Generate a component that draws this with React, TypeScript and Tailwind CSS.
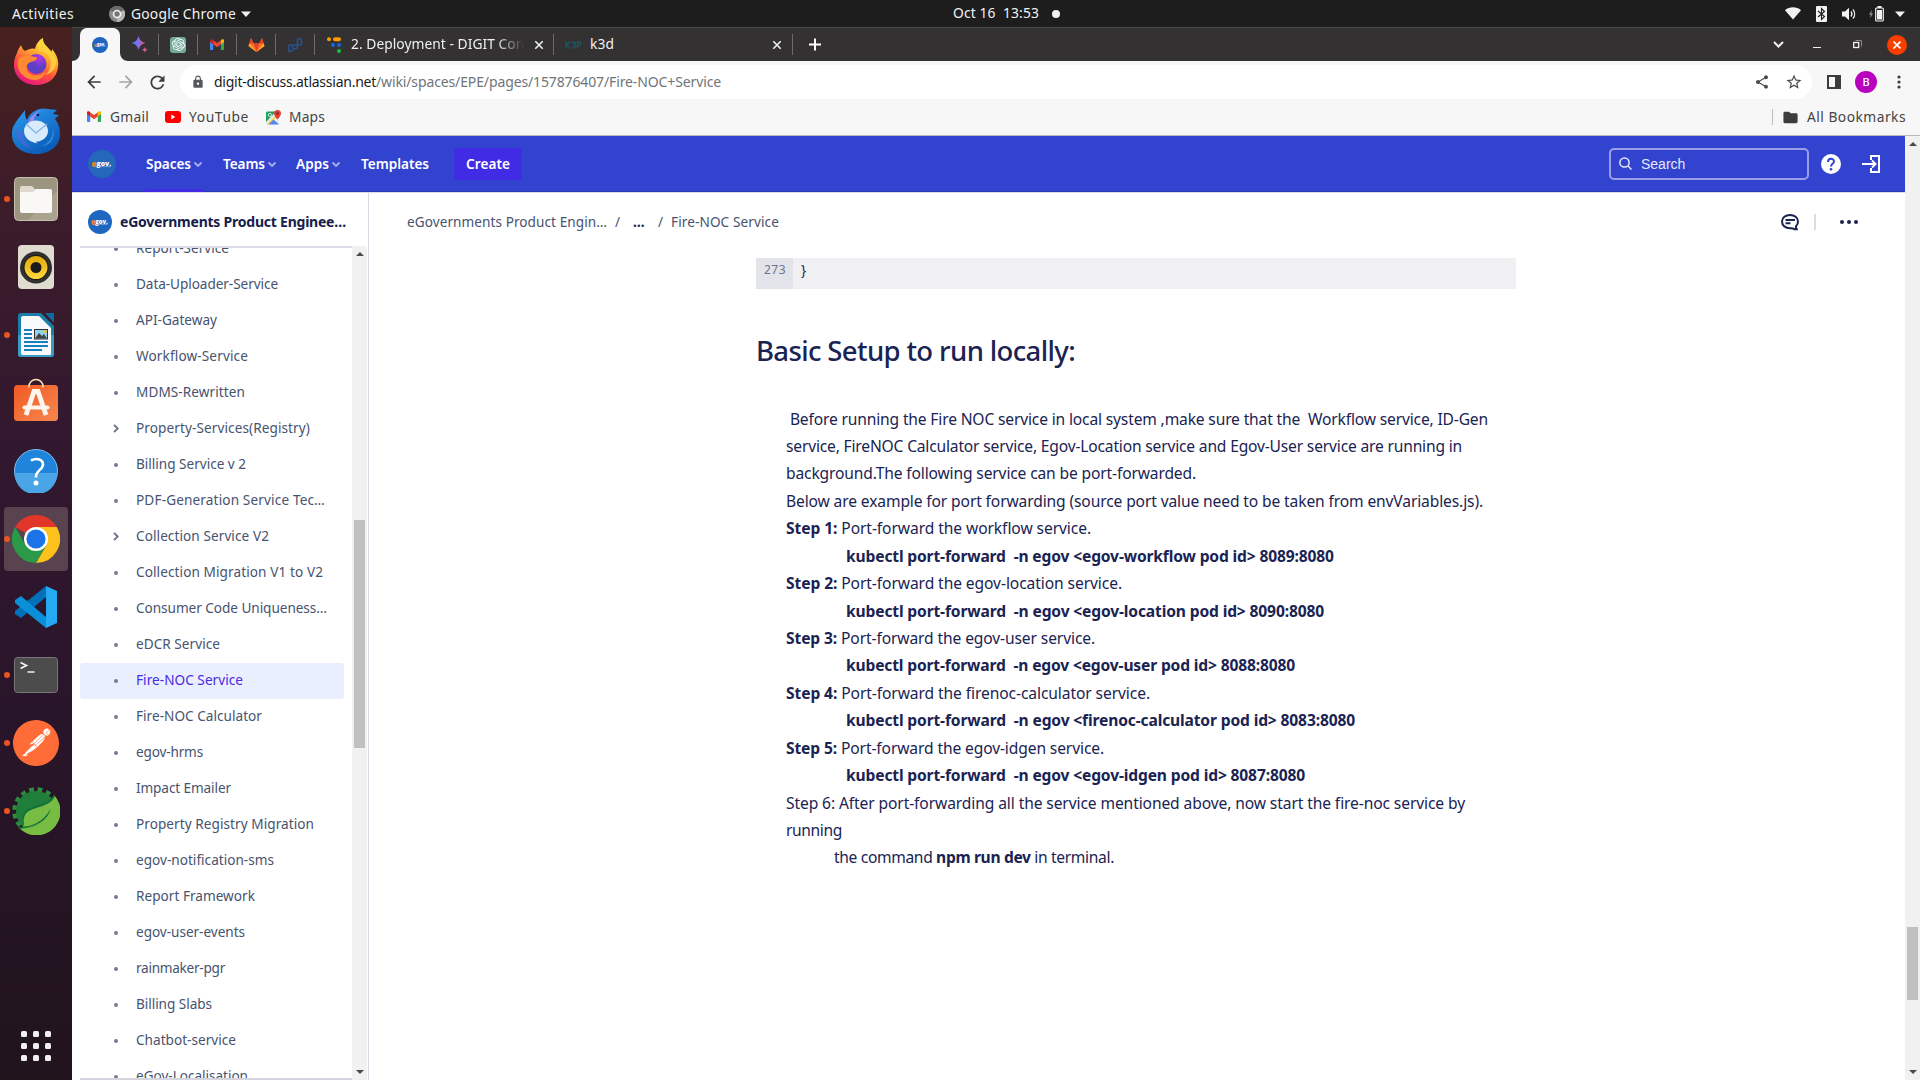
import React, { useLayoutEffect, useRef } from "react";
import { SiOpenai, SiPostman } from "react-icons/si";
import { MdShare, MdStarBorder, MdLock, MdFolder, MdArrowBack, MdArrowForward, MdRefresh } from "react-icons/md";

/** Inline text whose tracking is tuned so that it spans `w` pixels. */
function T({ w, className = "", children }: { w: number; className?: string; children: React.ReactNode }) {
  const ref = useRef<HTMLSpanElement>(null);
  useLayoutEffect(() => {
    const el = ref.current;
    if (!el) return;
    el.style.letterSpacing = "0px";
    const n = (el.textContent || "").length;
    el.style.letterSpacing = (w - el.getBoundingClientRect().width) / n + "px";
  }, [w]);
  return (
    <span ref={ref} className={"inline-block shrink-0 whitespace-pre " + className}>
      {children}
    </span>
  );
}

function EgovLogo({ size, bg = "#1f66c0" }: { size: number; bg?: string }) {
  return (
    <svg width={size} height={size} viewBox="0 0 28 28" className="shrink-0">
      <circle cx="14" cy="14" r="14" fill={bg} />
      <text x="3.600" y="17.300" fontSize="9.500" fontWeight="800" fontFamily="Open Sans, sans-serif" fill="#f58220" textLength="5" lengthAdjust="spacingAndGlyphs">e</text>
      <text x="8.600" y="15.800" fontSize="7.500" fontWeight="800" fontFamily="Open Sans, sans-serif" fill="#fff" textLength="14.500" lengthAdjust="spacingAndGlyphs">gov.</text>
      <rect x="13" y="16.400" width="10" height="0.700" fill="#8fb4e4" />
    </svg>
  );
}

function Gmail({ size = 14 }: { size?: number }) {
  return (
    <svg width={size} height={size * 0.79} viewBox="0 0 14 11" className="shrink-0">
      <path d="M0 1.5V10a1 1 0 0 0 1 1h2.2V4z" fill="#4285f4" />
      <path d="M14 1.5V10a1 1 0 0 1-1 1h-2.2V4z" fill="#34a853" />
      <path d="M10.8 1.2V5.4L14 3V1.5C14 .2 12.600-.3 11.600.5z" fill="#fbbc04" />
      <path d="M3.200 5.400V1.200L7 4.100l3.800-2.900v4.200L7 8.300z" fill="#ea4335" />
      <path d="M0 1.500V3l3.200 2.400V1.200L2.400.5C1.400-.3 0 .2 0 1.500z" fill="#c5221f" />
    </svg>
  );
}

const Close = () => (
  <svg width="10" height="10" viewBox="0 0 10 10" stroke="#f0f0f0" strokeWidth="1.600" className="shrink-0">
    <path d="M1.300 1.300l7.400 7.400M8.700 1.300L1.300 8.700" />
  </svg>
);

const Caret = ({ className = "" }: { className?: string }) => (
  <svg width="10" height="6" viewBox="0 0 10 6" fill="#f2f2f2" className={"shrink-0 " + className}>
    <path d="M0 .5h10L5 6z" />
  </svg>
);

function SystemBar() {
  return (
    <div className="flex h-[27px] items-center bg-[#1d1d1d] text-[13.800px] text-[#f2f2f2]">
      <div className="flex w-[953px] items-center">
        <T w={62} className="ml-3 pt-px">Activities</T>
        <svg width="16" height="16" viewBox="0 0 16 16" className="ml-[35px]">
          <circle cx="8" cy="8" r="8" fill="#8a8a8a" />
          <path d="M8 8L1.200 4A8 8 0 0 1 15 4z" fill="#6a6a6a" />
          <path d="M8 8L15 4a8 8 0 0 1-7 12z" fill="#b5b5b5" />
          <circle cx="8" cy="8" r="4.300" fill="#f2f2f2" />
          <circle cx="8" cy="8" r="2.700" fill="#777" />
        </svg>
        <T w={105} className="ml-1.5 pt-px">Google Chrome</T>
        <Caret className="ml-[5px]" />
      </div>
      <T w={86}>{"Oct 16  13:53"}</T>
      <div className="ml-[13px] h-[8px] w-[8px] rounded-full bg-[#f2f2f2]" />
      <div className="ml-auto flex h-full items-center pr-[15px]">
        <svg width="16" height="13" viewBox="0 0 16 13" fill="#f2f2f2"><path d="M0 3.200C4.500-.6 11.500-.6 16 3.200L8 12.500z" /></svg>
        <svg width="11" height="16" viewBox="0 0 11 16" className="ml-[15px]">
          <rect width="11" height="16" rx="1" fill="#f2f2f2" />
          <path d="M2 5l6.500 5.500L5.500 13.500v-11L8.500 5.500 2 11" fill="none" stroke="#1d1d1d" strokeWidth="1.100" />
        </svg>
        <svg width="15" height="14" viewBox="0 0 15 14" className="ml-[15px]">
          <path d="M0 4.500h3L7 .8v12.400L3 9.500H0z" fill="#f2f2f2" />
          <path d="M9 4.500a4 4 0 0 1 0 5M11 2.500a7 7 0 0 1 0 9" fill="none" stroke="#f2f2f2" strokeWidth="1.300" />
        </svg>
        <svg width="15" height="16" viewBox="0 0 15 16" className="ml-[12px]">
          <path d="M2.800 4L0 8.500h1.800L1.200 12 4 7.500H2.200z" fill="#999" />
          <rect x="6.700" y="2" width="7.600" height="13" rx="1" fill="none" stroke="#f2f2f2" strokeWidth="1.200" />
          <rect x="8" y="4" width="5" height="9.500" fill="#f2f2f2" />
          <rect x="8.500" y="0" width="4" height="2" fill="#f2f2f2" />
        </svg>
        <Caret className="ml-[11px]" />
      </div>
    </div>
  );
}

function DockItem({ running, active, children }: { running?: boolean; active?: boolean; children: React.ReactNode }) {
  return (
    <div className={"relative mx-auto flex h-16 w-16 items-center justify-center " + (active ? "rounded bg-[#59434f]" : "")}>
      {running && <div className="absolute top-[29px] left-0 h-[6px] w-[6px] rounded-full bg-[#e95420]" />}
      {children}
    </div>
  );
}

function Dock() {
  return (
    <div className="flex w-[72px] shrink-0 flex-col gap-1 bg-[linear-gradient(180deg,#48211f_0%,#3b1c2a_18%,#32182f_40%,#29152a_65%,#21141d_100%)] pt-1">
      <DockItem>
        <svg width="46" height="48" viewBox="0 0 46 48" className="mb-[2px]">
          <defs>
            <linearGradient id="ff" x1=".8" y1="0" x2=".3" y2="1"><stop offset="0" stopColor="#fff44f" /><stop offset=".35" stopColor="#ffb02e" /><stop offset=".65" stopColor="#ff4f3d" /><stop offset="1" stopColor="#e31587" /></linearGradient>
            <radialGradient id="ffp" cx=".65" cy=".2"><stop offset="0" stopColor="#b536e6" /><stop offset="1" stopColor="#5b3fc4" /></radialGradient>
          </defs>
          <path d="M4 15c1-4 3-6 4-8 1 3 2 5 4 6 4-2 7-3 10-2C23 6 26 2 30 0c-1 5 4 8 8 13 1 1 1-1 1-2 5 6 7 12 6 18-1 11-10 18-22 18C10 47 1 38 1 27c0-5 1-8 3-12z" fill="url(#ff)" />
          <circle cx="23.500" cy="26" r="10" fill="url(#ffp)" />
          <path d="M6 20c5-3 11-2 17-1 2 1 1 3-2 4-4 1-6 2-7 4-1 5 1 9 7 10 5 1 9-1 12-4-2 8-10 11-17 8-9-3-14-13-10-21z" fill="#ff8a32" />
          <path d="M26 13c6 0 11 4 12 10 0 6-2 11-6 14 8-2 12-8 11-15-2-6-5-8-9-12-3-3-4-6-4-10-6 4-5 9-4 13z" fill="#ffd43e" opacity=".8" />
        </svg>
      </DockItem>
      <DockItem>
        <svg width="48" height="48" viewBox="0 0 48 48">
          <defs><linearGradient id="tb" x1="0" y1="0" x2=".6" y2="1"><stop offset="0" stopColor="#2d9cf0" /><stop offset="1" stopColor="#0b5cb8" /></linearGradient></defs>
          <path d="M1 20C4 14 9 8 13 3c0 4 0 7 2 10C19 4 27 0 36 2l9 1c-2 2-4 3-4 4l6 1-4 4c4 5 5 10 5 15 0 12-10 20-24 20C9 47 0 38 0 28c0-3 0-5 1-8z" fill="url(#tb)" />
          <path d="M16 16c2-6 7-11 14-13-6 3-9 7-8 14z" fill="#a184ef" />
          <circle cx="26" cy="8" r="1.300" fill="#111a55" />
          <path d="M12 24a12 10.500 0 1 1 12 10.500c1 2 2 2 4 2-7 0-16-4-16-12.500z" fill="#d9ecfb" />
          <path d="M14 17l10 9 11-9" fill="none" stroke="#87b9e8" strokeWidth="1.500" />
          <path d="M4 22c0 10 6 17 16 20-5-4-9-9-9-16" fill="#5968de" opacity=".6" />
          <path d="M41 20c1 9-4 17-12 19 9 0 15-7 12-19z" fill="#4ab5ff" opacity=".5" />
        </svg>
      </DockItem>
      <DockItem running>
        <svg width="44" height="44" viewBox="0 0 44 44">
          <rect x=".5" y=".5" width="43" height="43" rx="4" fill="#9c9580" stroke="#c5bfae" />
          <path d="M14 43L43 14v26a3 3 0 0 1-3 3z" fill="#aaa48f" />
          <path d="M6 11a2 2 0 0 1 2-2h10l3 3v8H6z" fill="#dedad0" />
          <path d="M6 15h13l3-3h14a2 2 0 0 1 2 2v20a2 2 0 0 1-2 2H8a2 2 0 0 1-2-2z" fill="#f9f8f7" />
        </svg>
      </DockItem>
      <DockItem>
        <svg width="38" height="46" viewBox="0 0 38 46">
          <defs><linearGradient id="sp" x1="0" y1="0" x2="0" y2="1"><stop offset="0" stopColor="#e0aa08" /><stop offset="1" stopColor="#ffd83d" /></linearGradient></defs>
          <rect x="1" y="1" width="36" height="44" rx="4" fill="#e0dcd0" />
          <circle cx="19" cy="23.500" r="16" fill="#303030" />
          <circle cx="19" cy="23.500" r="12.500" fill="#16160f" />
          <circle cx="19" cy="23.500" r="11.500" fill="url(#sp)" />
          <circle cx="19" cy="23.500" r="5.500" fill="#1b1b1b" />
        </svg>
      </DockItem>
      <DockItem running>
        <svg width="36" height="44" viewBox="0 0 36 44">
          <path d="M3 0h20l13 13v28a3 3 0 0 1-3 3H3a3 3 0 0 1-3-3V3a3 3 0 0 1 3-3z" fill="#1c7ea8" />
          <path d="M0 22h36v19a3 3 0 0 1-3 3H3a3 3 0 0 1-3-3z" fill="#3a9cc6" />
          <path d="M27 0h9v10z" fill="#0c6a9e" />
          <path d="M5 3h16l12 12v26a1 1 0 0 1-1 1H5a2 2 0 0 1-2-2V5a2 2 0 0 1 2-2z" fill="#f7f9fa" />
          <path d="M6 17h8M6 21h8M6 25h8M6 29h24M6 33h24M6 37h18" stroke="#1a7fc0" strokeWidth="1.800" />
          <rect x="16.500" y="16.500" width="13" height="9.500" fill="#8fd0ee" stroke="#333" />
          <path d="M17 25.500l4-5.500 3 3 2-2 3 4.500z" fill="#444" />
          <circle cx="27.500" cy="18.500" r="1.500" fill="#f5c211" />
        </svg>
      </DockItem>
      <DockItem>
        <svg width="44" height="44" viewBox="0 0 44 44" className="mb-[6px]">
          <defs><linearGradient id="sw" x1="0" y1="0" x2="1" y2="1"><stop offset="0" stopColor="#f15a24" /><stop offset="1" stopColor="#f6874f" /></linearGradient></defs>
          <rect x="0" y="7" width="44" height="36" rx="3.500" fill="url(#sw)" />
          <path d="M15 9.500V8.500a7 7 0 0 1 14 0v1" fill="none" stroke="#ffe0b5" strokeWidth="1.600" />
          <path d="M12 37L20 13.500h4L32 37" fill="none" stroke="#fff4ee" strokeWidth="4.800" strokeLinejoin="miter" />
          <path d="M10.500 29.500h23" stroke="#fff4ee" strokeWidth="4" strokeLinecap="round" />
        </svg>
      </DockItem>
      <DockItem>
        <svg width="44" height="44" viewBox="0 0 44 44">
          <circle cx="22" cy="22" r="21.500" fill="#1f84da" stroke="#7cc0f0" />
          <path d="M.5 24h43a21.500 21.500 0 0 1-43 0z" fill="#4aa5e6" />
          <path d="M17 11.500c6-3 12-1 12 4 0 5-7 6-7 12v1" fill="none" stroke="#fff" strokeWidth="2.600" />
          <circle cx="22" cy="34" r="2.500" fill="#fff" />
        </svg>
      </DockItem>
      <DockItem running active>
        <svg width="48" height="48" viewBox="0 0 48 48">
          <path d="M24 24L3.200 12A24 24 0 0 1 44.800 12z" fill="#e1372b" />
          <path d="M24 12h20.800A24 24 0 0 1 24 48L34.400 30z" fill="#fcc21b" />
          <path d="M3.200 12A24 24 0 0 0 24 48l10.400-18L24 24l-10.400 6z" fill="#2b9a48" />
          <circle cx="24" cy="24" r="12" fill="#fff" />
          <circle cx="24" cy="24" r="9.600" fill="#1a73e8" />
        </svg>
      </DockItem>
      <DockItem>
        <svg width="42" height="42" viewBox="0 0 42 42">
          <path d="M31 0l11 5v32l-11 5z" fill="#24a9f2" />
          <path d="M31 0v11L6 32 0 28v-3z" fill="#0070b8" />
          <path d="M31 42V31L6 10l-6 4v3z" fill="#0a8fd8" />
        </svg>
      </DockItem>
      <DockItem running>
        <svg width="44" height="36" viewBox="0 0 44 36">
          <rect x=".5" y=".5" width="43" height="35" rx="3" fill="#4c4c4c" stroke="#777" />
          <path d="M6.500 5.500l6 3-6 3" fill="none" stroke="#f2f2f2" strokeWidth="1.700" />
          <path d="M13.500 15h7" stroke="#f2f2f2" strokeWidth="1.500" />
        </svg>
      </DockItem>
      <DockItem running>
        <div className="mb-px flex h-[44px] w-[44px] items-center justify-center rounded-full bg-white">
          <SiPostman size={46} color="#ff6c37" className="shrink-0" />
        </div>
      </DockItem>
      <DockItem running>
        <svg width="48" height="48" viewBox="0 0 48 48">
          <circle cx="24" cy="24" r="21" fill="none" stroke="#2d8c3c" strokeWidth="5.500" strokeDasharray="4.600 3.730" />
          <circle cx="24" cy="24" r="20" fill="#1f7f3a" />
          <path d="M42 8A24 24 0 1 1 6.500 40.300C20 43 38 38 42 8z" fill="#77bc43" />
          <path d="M7 41c8-2 4-4 5-9C12 18 36 24 42 9c4 7-2 32-35 32z" fill="#77bc43" />
          <path d="M42 9C37 22 14 16 11 31" fill="none" stroke="#12713a" strokeWidth="1.800" />
          <path d="M7 40c12 0 24-4 31.500-18C36 33 24 40 7 42z" fill="#0b6b35" />
        </svg>
      </DockItem>
      <div className="mx-auto mt-auto mb-[19px] grid grid-cols-3 gap-[6px]">
        {Array.from({ length: 9 }, (_, i) => (
          <div key={i} className="h-[6px] w-[6px] rounded-[1.500px] bg-[#f0eeee]" />
        ))}
      </div>
    </div>
  );
}

function MiniTab({ children }: { children: React.ReactNode }) {
  return (
    <div className="flex h-full w-[39px] items-center">
      <div className="flex w-[38px] justify-center">{children}</div>
      <div className="h-[21px] w-px bg-[#6c6a6b]" />
    </div>
  );
}

function TabStrip() {
  return (
    <div className="flex h-[34px] items-center border-t border-[#4a4849] bg-[#333132] text-[13.800px] text-[#f0f0f0]">
      <div className="flex h-full w-2 items-end bg-[#f7f7f7]"><div className="h-full w-2 rounded-br-[8px] bg-[#333132]" /></div>
      <div className="h-full w-10 bg-[#333132]">
        <div className="flex h-full items-center justify-center rounded-t-[7px] bg-[#f7f7f7]"><EgovLogo size={16} /></div>
      </div>
      <div className="flex h-full w-2 items-end bg-[#f7f7f7]"><div className="h-full w-2 rounded-bl-[8px] bg-[#333132]" /></div>
      <div className="-ml-2 flex h-full items-center">
        <MiniTab>
          <svg width="17" height="17" viewBox="0 0 17 17">
            <defs><linearGradient id="bard" x1="0" y1="0" x2="1" y2="0"><stop offset="0" stopColor="#2b8cff" /><stop offset=".5" stopColor="#8a6be8" /><stop offset="1" stopColor="#f0506a" /></linearGradient></defs>
            <path d="M7.500 0c1.500 4.500 2.500 5.500 7 7-4.500 1.500-5.500 2.500-7 7-1.500-4.500-2.500-5.500-7-7 4.500-1.500 5.500-2.500 7-7z" fill="url(#bard)" />
            <path d="M13.800 10.800c.5 1.800 1.200 2.500 3 3-1.800.5-2.500 1.200-3 3-.5-1.800-1.200-2.500-3-3 1.800-.5 2.500-1.200 3-3z" fill="#d05c8c" />
          </svg>
        </MiniTab>
        <MiniTab>
          <div className="flex h-4 w-4 items-center justify-center rounded-[3px] bg-[#74aa9c]"><SiOpenai size={13} color="#fff" /></div>
        </MiniTab>
        <MiniTab><Gmail /></MiniTab>
        <MiniTab>
          <svg width="17" height="16" viewBox="0 0 17 16">
            <path d="M8.500 15L0.500 9 3 1l2.700 5.500h5.600L14 1l2.500 8z" fill="#fc6d26" />
            <path d="M8.500 15L5.700 6.500h5.600z" fill="#e24329" />
            <path d="M8.500 15L.5 9 1.500 6z M8.500 15l8-6-1-3z" fill="#fca326" />
            <path d="M3 1l2.700 5.500H1.400zM14 1l-2.700 5.500h4.300z" fill="#e24329" />
          </svg>
        </MiniTab>
        <MiniTab>
          <svg width="16" height="16" viewBox="0 0 16 16" fill="none" stroke="#2a5390" strokeWidth="1.600">
            <path d="M5.500 12.500a2 2 0 0 1-4 0V10a2 2 0 0 1 2-2h9a2 2 0 0 0 2-2V3.500a2 2 0 0 0-4 0V9.500a2.500 2.500 0 0 1-2.500 2.500 2.300 2.300 0 0 1-2.500-2.300V7.500" />
          </svg>
        </MiniTab>
      </div>
      <div className="flex h-full w-[239px] items-center">
        <svg width="15" height="16" viewBox="0 0 15 16" className="ml-3">
          <circle cx="2" cy="2.200" r="2" fill="#f90" /><rect x="6" y=".2" width="8" height="4" rx="2" fill="#f90" />
          <circle cx="6" cy="8" r="2" fill="#1868db" /><circle cx="12" cy="8" r="2" fill="#1868db" /><circle cx="12" cy="14" r="2" fill="#16c235" />
        </svg>
        <div className="ml-[9px] w-[177px] overflow-hidden [mask-image:linear-gradient(90deg,#000_82%,transparent_98%)]">
          <T w={178}>2. Deployment - DIGIT Core</T>
        </div>
        <div className="ml-[6px] flex flex-1 items-center"><Close /></div>
        <div className="h-[21px] w-px bg-[#6c6a6b]" />
      </div>
      <div className="flex h-full w-[239px] items-center">
        <svg width="17" height="8" viewBox="0 0 17 8" className="ml-[11px]" fill="none" stroke="#17606c" strokeWidth="1.400">
          <path d="M1 .5v7M5 .5L2 4l3 3.500M7 2l2-1 1.500 1.500L9 4l1.500 1.500L9 7 7 6M12.500 .5v7M13 1h2l1 1.500-1 2h-2" strokeDasharray="2 .6" />
        </svg>
        <T w={24} className="ml-[8px]">k3d</T>
        <div className="ml-auto mr-[10px] flex"><Close /></div>
        <div className="h-[21px] w-px bg-[#6c6a6b]" />
      </div>
      <svg width="13" height="13" viewBox="0 0 13 13" className="ml-[16px]" stroke="#fff" strokeWidth="2"><path d="M6 .5v12M0 6.500h12" /></svg>
      <div className="ml-auto flex items-center pr-[13px]">
        <svg width="11" height="7" viewBox="0 0 11 7" fill="none" stroke="#f0f0f0" strokeWidth="2"><path d="M1 1l4.500 4.500L10 1" /></svg>
        <div className="mt-[5px] ml-[29px] h-px w-2 bg-[#f0f0f0]" />
        <svg width="9" height="9" viewBox="0 0 9 9" className="ml-8" fill="none"><path d="M2.500.5h6v6" stroke="#8b898a" /><rect x=".7" y="2.500" width="5" height="5" stroke="#f0f0f0" strokeWidth="1.300" /></svg>
        <div className="ml-[25px] flex h-5 w-5 items-center justify-center rounded-full bg-[#f93e00]">
          <svg width="8" height="8" viewBox="0 0 8 8" stroke="#fff" strokeWidth="1.600"><path d="M.5.5l7 7M7.500.5l-7 7" /></svg>
        </div>
      </div>
    </div>
  );
}

function Toolbar() {
  return (
    <div className="flex h-[39px] items-center bg-[#f7f7f7] pt-1 pb-px text-[14px]">
      <MdArrowBack size={20} color="#3c3c3c" className="ml-3" />
      <MdArrowForward size={20} color="#a5a5a5" className="ml-3" />
      <MdRefresh size={21} color="#3c3c3c" className="ml-[11px]" />
      <div className="ml-3 flex h-[34px] w-[1632px] items-center rounded-full bg-white">
        <MdLock size={14} color="#55585d" className="ml-[11px]" />
        <T w={162} className="ml-[9px] pb-[2px] text-[#1a1a1a]">digit-discuss.atlassian.net</T>
        <T w={345} className="pb-[2px] text-[#70757a]">/wiki/spaces/EPE/pages/157876407/Fire-NOC+Service</T>
        <MdShare size={16} color="#4b4b4b" className="mb-px ml-auto" />
        <MdStarBorder size={18} color="#4b4b4b" className="mr-[9px] ml-[15px]" />
      </div>
      <svg width="14" height="14" viewBox="0 0 14 14" className="ml-[15px]"><path d="M0 0h14v14H0zM2 2v10h6V2z" fill="#3c3c3c" fillRule="evenodd" /></svg>
      <div className="ml-[14px] flex h-[22px] w-[22px] items-center justify-center rounded-full bg-[#b900bf] text-[11px] font-medium text-white">B</div>
      <svg width="4" height="14" viewBox="0 0 4 14" className="ml-5" fill="#3c3c3c"><circle cx="2" cy="2" r="1.600" /><circle cx="2" cy="7" r="1.600" /><circle cx="2" cy="12" r="1.600" /></svg>
    </div>
  );
}

function Bookmarks() {
  return (
    <div className="flex h-9 items-center border-b border-[#b9b9bb] bg-[#f7f7f7] pb-px text-[13.800px] text-[#444]">
      <div className="ml-[15px] flex"><Gmail /></div>
      <T w={39} className="ml-[9px]">Gmail</T>
      <svg width="16" height="12" viewBox="0 0 16 12" className="ml-4"><rect width="16" height="12" rx="3" fill="#f00" /><path d="M6.300 3.500v5l4-2.500z" fill="#fff" /></svg>
      <T w={60} className="ml-2">YouTube</T>
      <svg width="16" height="15" viewBox="0 0 16 15" className="ml-[17px]">
        <rect y="1.500" width="13" height="13" rx="1.500" fill="#e8eaed" />
        <path d="M0 3a1.500 1.500 0 0 1 1.500-1.500H10L0 12z" fill="#1fa05a" />
        <path d="M1 14L12 3l1 1.500L3 14.500z" fill="#fdd14b" />
        <path d="M2.500 14.500l5-5 5.500 5z" fill="#5487ee" />
        <circle cx="3.800" cy="5" r="1.600" fill="none" stroke="#d5f0e0" />
        <path d="M11.500 0a3.500 3.500 0 0 1 3.500 3.500c0 2.500-3.500 6-3.500 6S8 6 8 3.500A3.500 3.500 0 0 1 11.500 0z" fill="#e0403a" />
        <circle cx="11.500" cy="3.500" r="1.200" fill="#8a1f1b" />
      </svg>
      <T w={36} className="ml-[7px]">Maps</T>
      <div className="ml-auto h-4 w-px bg-[#bdbdbd]" />
      <MdFolder size={17} color="#3c3c3c" className="ml-[9px]" />
      <T w={99} className="mr-[14px] ml-[8px]">All Bookmarks</T>
    </div>
  );
}

const Chev = () => (
  <svg width="8" height="5" viewBox="0 0 8 5" className="mt-[2px] ml-[3px]" fill="none" stroke="#9fa6ea" strokeWidth="2" strokeLinecap="round"><path d="M1 1l3 3 3-3" /></svg>
);

function AppHeader() {
  return (
    <div className="flex h-[56px] shrink-0 items-center border-b border-[#2a38b8] bg-[#3243d0] pr-[25px] pl-4 text-[13.600px] font-semibold text-white">
      <EgovLogo size={28} bg="#2368b9" />
      <div className="relative ml-7 flex h-full w-[60px] items-center pl-[2px]">
        <T w={45} className="pt-[2px]">Spaces</T><Chev />
        <div className="absolute -bottom-px left-0 h-[3px] w-[60px] rounded-t-sm bg-[#422be4]" />
      </div>
      <T w={42} className="ml-[19px] pt-[2px]">Teams</T><Chev />
      <T w={33} className="ml-5 pt-[2px]">Apps</T><Chev />
      <T w={68} className="ml-[21px] pt-[2px]">Templates</T>
      <div className="ml-[25px] flex h-8 w-[68px] items-center justify-center rounded-[3px] bg-[#422be4]"><T w={44} className="pt-[2px]">Create</T></div>
      <div className="ml-auto flex h-8 w-[200px] items-center rounded-[5px] border-2 border-[#9a9fe8] pl-2">
        <svg width="13" height="13" viewBox="0 0 13 13" fill="none" stroke="#e6e7fa" strokeWidth="1.500"><circle cx="5.500" cy="5.500" r="4.600" /><path d="M9 9l3.500 3.500" /></svg>
        <span className="ml-[9px] pt-[2px] font-['Liberation_Sans',sans-serif] text-[14px] font-normal text-[#e6e7fa]">Search</span>
      </div>
      <svg width="20" height="20" viewBox="0 0 20 20" className="ml-3"><circle cx="10" cy="10" r="10" fill="#fff" /><path d="M7 8C7 3.700 13 3.900 13 7.500c0 2.300-3 2.400-3 5" fill="none" stroke="#3243d0" strokeWidth="2" /><circle cx="10" cy="15.300" r="1.300" fill="#3243d0" /></svg>
      <svg width="18" height="18" viewBox="0 0 18 18" className="ml-[21px]" fill="none" stroke="#fff" strokeWidth="2"><path d="M9 5V1h8v16H9v-4M0 9h13" /><path d="M10 5.500L13.500 9 10 12.500" /></svg>
    </div>
  );
}

const tree: [string, number, boolean?][] = [
  ["Report-Service", 93], ["Data-Uploader-Service", 142], ["API-Gateway", 81], ["Workflow-Service", 112],
  ["MDMS-Rewritten", 109], ["Property-Services(Registry)", 174, true], ["Billing Service v 2", 110],
  ["PDF-Generation Service Tec…", 189], ["Collection Service V2", 133, true], ["Collection Migration V1 to V2", 187],
  ["Consumer Code Uniqueness…", 191], ["eDCR Service", 84], ["Fire-NOC Service", 107], ["Fire-NOC Calculator", 126],
  ["egov-hrms", 67], ["Impact Emailer", 95], ["Property Registry Migration", 178], ["egov-notification-sms", 138],
  ["Report Framework", 119], ["egov-user-events", 109], ["rainmaker-pgr", 89], ["Billing Slabs", 76],
  ["Chatbot-service", 100], ["eGov-Localisation", 112],
];

const ArrowUp = () => <svg width="8" height="4" viewBox="0 0 8 4" fill="#4a4a4a"><path d="M4 0l4 4H0z" /></svg>;
const ArrowDown = () => <svg width="8" height="4" viewBox="0 0 8 4" fill="#4a4a4a"><path d="M4 4L0 0h8z" /></svg>;

function Sidebar() {
  return (
    <div className="flex w-[297px] shrink-0 flex-col border-r border-[#d9d9e3]">
      <div className="flex h-[53px] shrink-0 items-center pt-[5px] pl-4">
        <EgovLogo size={24} />
        <T w={226} className="ml-2 pb-[2px] text-[14px] font-bold text-[#16204a]">eGovernments Product Enginee…</T>
      </div>
      <div className="flex min-h-0 flex-1">
        <div className="relative ml-2 w-[272px] overflow-hidden border-t-2 border-[#dcdce6]">
          <div className="-mt-[17px]">
            {tree.map(([label, w, expandable], i) => (
              <div key={label} className={"flex h-9 w-[264px] items-center rounded-[3px] text-[13.600px] " + (i === 12 ? "bg-[#e9effe] text-[#4a2be2]" : "text-[#47536f]")}>
                <div className="ml-[30px] flex w-3 justify-center pb-px">
                  {expandable ? (
                    <svg width="6" height="9" viewBox="0 0 6 9" fill="none" stroke="#6b7289" strokeWidth="1.900"><path d="M1 .8l3.700 3.700L1 8.200" /></svg>
                  ) : (
                    <div className="h-1 w-1 rounded-full bg-[#757c93]" />
                  )}
                </div>
                <T w={w} className="ml-[14px] pb-[2px]">{label}</T>
              </div>
            ))}
          </div>
          <div className="absolute bottom-0 left-0 h-[2px] w-full bg-[#d5d5df]" />
        </div>
        <div className="flex w-[15px] flex-col items-center bg-[#f1f1f1] pt-[6px] pb-[6px]">
          <ArrowUp />
          <div className="mt-[264px] h-[228px] w-[11px] bg-[#c1c1c1]" />
          <div className="mt-auto"><ArrowDown /></div>
        </div>
      </div>
    </div>
  );
}

const steps: [string, string, number, string, number][] = [
  ["Step 1:", " Port-forward the workflow service.", 305, "kubectl port-forward  -n egov <egov-workflow pod id> 8089:8080", 488],
  ["Step 2:", " Port-forward the egov-location service.", 336, "kubectl port-forward  -n egov <egov-location pod id> 8090:8080", 478],
  ["Step 3:", " Port-forward the egov-user service.", 309, "kubectl port-forward  -n egov <egov-user pod id> 8088:8080", 449],
  ["Step 4:", " Port-forward the firenoc-calculator service.", 364, "kubectl port-forward  -n egov <firenoc-calculator pod id> 8083:8080", 509],
  ["Step 5:", " Port-forward the egov-idgen service.", 318, "kubectl port-forward  -n egov <egov-idgen pod id> 8087:8080", 459],
];

function Line({ children }: { children: React.ReactNode }) {
  return <div className="flex h-[27.430px] items-center">{children}</div>;
}

function Article() {
  return (
    <div className="flex min-w-0 flex-1 flex-col">
      <div className="flex h-[58px] items-center pr-[47px] pl-[38px] text-[13.600px] text-[#47536f]">
        <T w={200}>eGovernments Product Engin…</T>
        <T w={7} className="ml-[8px]">/</T>
        <T w={13} className="ml-[11px] font-bold text-[#172b4d]">…</T>
        <T w={7} className="ml-[12px]">/</T>
        <T w={108} className="ml-[6px]">Fire-NOC Service</T>
        <svg width="18" height="17" viewBox="0 0 18 17" className="ml-auto" fill="none" stroke="#1a2352" strokeWidth="2">
          <path d="M16.800 15.300H13.500C12 14 11 14.200 9 14.200c-4.500 0-8-2.700-8-6.600S4.500 1 9 1s8 2.700 8 6.600c0 2-.8 3.500-2 4.700v3" />
          <path d="M4.500 6h9.500M4.500 9.200h5" />
        </svg>
        <div className="ml-[15px] h-4 w-[2px] bg-[#dcdce6]" />
        <div className="ml-6 flex gap-[3px]">
          <div className="h-1 w-1 rounded-full bg-[#1a2352]" /><div className="h-1 w-1 rounded-full bg-[#1a2352]" /><div className="h-1 w-1 rounded-full bg-[#1a2352]" />
        </div>
      </div>
      <div className="ml-[387px] w-[760px] text-[#1a2352]">
        <div className="mt-[7px] flex h-[31px] bg-[#f0f0f3] text-[12px] leading-6">
          <div className="w-[37px] bg-[#e3e3ea] pl-2 text-[#6c7391]"><T w={22}>273</T></div>
          <T w={6} className="ml-2 text-[13.500px]">{"}"}</T>
        </div>
        <h2 className="mt-[42px] h-10 text-[27.500px] leading-10 font-medium"><T w={319}>Basic Setup to run locally:</T></h2>
        <div className="mt-[34.600px] pl-[30px] text-[15.600px]">
          <Line><T w={702}>{" Before running the Fire NOC service in local system ,make sure that the  Workflow service, ID-Gen"}</T></Line>
          <Line><T w={676}>service, FireNOC Calculator service, Egov-Location service and Egov-User service are running in</T></Line>
          <Line><T w={410}>background.The following service can be port-forwarded.</T></Line>
          <Line><T w={697}>Below are example for port forwarding (source port value need to be taken from envVariables.js).</T></Line>
          {steps.map(([label, text, w, cmd, cw]) => (
            <React.Fragment key={label}>
              <Line><T w={w}><b>{label}</b>{text}</T></Line>
              <Line><T w={cw} className="ml-[60px] font-bold">{cmd}</T></Line>
            </React.Fragment>
          ))}
          <Line><T w={679}>Step 6: After port-forwarding all the service mentioned above, now start the fire-noc service by</T></Line>
          <Line><T w={56}>running</T></Line>
          <Line><T w={280} className="ml-12">the command <b>npm run dev</b> in terminal.</T></Line>
        </div>
      </div>
    </div>
  );
}

export default function App() {
  return (
    <div className="flex h-[1080px] w-[1920px] flex-col overflow-hidden bg-white font-['Noto_Sans','Open_Sans',sans-serif]">
      <SystemBar />
      <div className="flex min-h-0 flex-1">
        <Dock />
        <div className="flex min-w-0 flex-1 flex-col">
          <TabStrip />
          <Toolbar />
          <Bookmarks />
          <div className="flex min-h-0 flex-1">
            <div className="flex min-w-0 flex-1 flex-col">
              <AppHeader />
              <div className="flex min-h-0 flex-1 border-t border-[#dcdce8]">
                <Sidebar />
                <Article />
              </div>
            </div>
            <div className="flex w-[15px] flex-col items-center bg-[#f1f1f1] pt-[6px] pb-[6px]">
              <ArrowUp />
              <div className="mt-[781px] h-[73px] w-[11px] bg-[#c1c1c1]" />
              <div className="mt-auto"><ArrowDown /></div>
            </div>
          </div>
        </div>
      </div>
    </div>
  );
}
